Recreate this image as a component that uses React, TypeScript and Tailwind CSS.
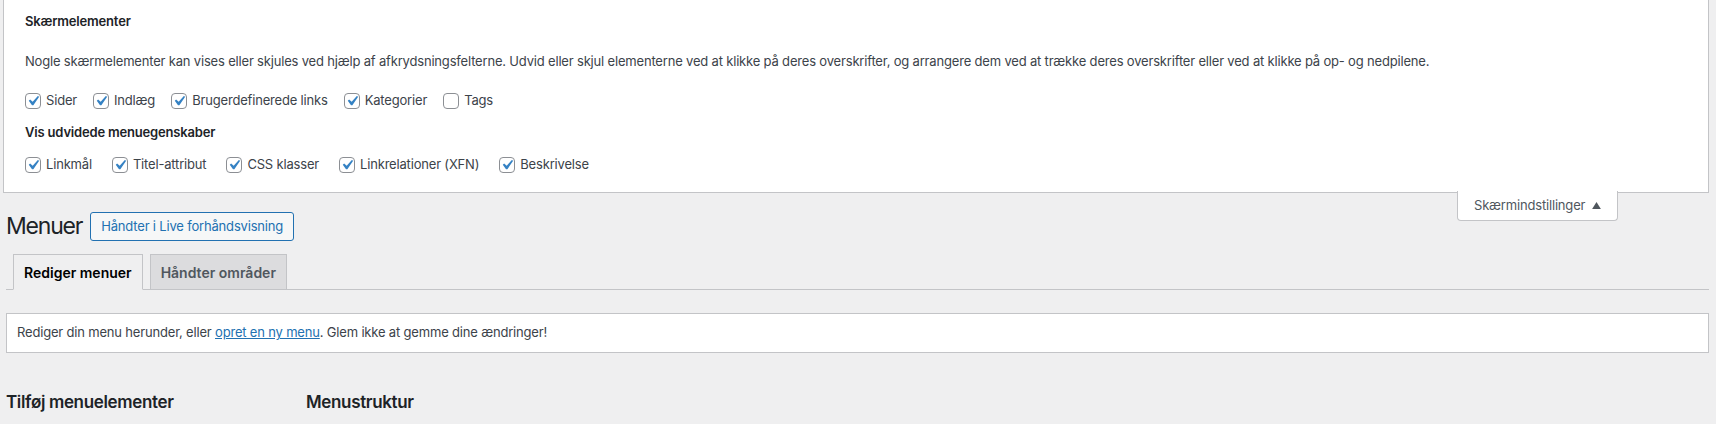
import React from 'react';

const font = "font-['Inter','Liberation_Sans',sans-serif]";

function Check({ label, checked = true }: { label: string; checked?: boolean }) {
  return (
    <label className="flex items-center">
      <span className="flex h-4 w-4 items-center justify-center rounded-[4px] border border-[#8c8f94] bg-white">
        {checked && (
          <svg viewBox="0 0 20 20" className="h-[20px] w-[20px] shrink-0">
            <path d="M14.83 4.89l1.34.94-5.81 8.38H9.02L5.78 9.67l1.34-1.25 2.57 2.4z" fill="#3582c4" />
          </svg>
        )}
      </span>
      <span className="ml-[5px] text-[13px] text-[#3c434a]">{label}</span>
    </label>
  );
}

export default function App() {
  return (
    <div className={`min-h-screen w-full bg-[#efeff0] tracking-[-0.18px] ${font}`}>
      {/* Screen options panel */}
      <div className="relative ml-[3px] mr-[7px] border-x border-b border-[#c3c4c7] bg-white px-[21px] pb-[15px] pt-[12px]">
        <div className="flex h-5 items-center text-[13px] font-semibold text-[#1d2327]">Skærmelementer</div>
        <div className="mt-5 flex h-5 items-center text-[13px] text-[#3c434a]">
          Nogle skærmelementer kan vises eller skjules ved hjælp af afkrydsningsfelterne. Udvid eller skjul elementerne ved at klikke på deres overskrifter, og arrangere dem ved at trække deres overskrifter eller ved at klikke på op- og nedpilene.
        </div>
        <div className="mt-[17px] flex h-6 items-center gap-[16px]">
          <Check label="Sider" />
          <Check label="Indlæg" />
          <Check label="Brugerdefinerede links" />
          <Check label="Kategorier" />
          <Check label="Tags" checked={false} />
        </div>
        <div className="mt-[10px] flex h-5 items-center text-[13px] font-semibold text-[#1d2327]">Vis udvidede menuegenskaber</div>
        <div className="mt-[10px] flex h-6 items-center gap-[20px]">
          <Check label="Linkmål" />
          <Check label="Titel-attribut" />
          <Check label="CSS klasser" />
          <Check label="Linkrelationer (XFN)" />
          <Check label="Beskrivelse" />
        </div>

        {/* Screen options toggle tab */}
        <button className="absolute right-[90px] top-[calc(100%-1px)] flex h-[30px] w-[161px] items-center rounded-b-[4px] border-x border-b border-[#c3c4c7] bg-white pl-[16px] text-[13px] text-[#50575e]">
          Skærmindstillinger
          <svg viewBox="0 0 10 8" className="ml-[7px] h-[7px] w-[9px]">
            <path d="M5 0L10 8H0z" fill="#50575e" />
          </svg>
        </button>
      </div>

      <div className="ml-[6px] mr-[7px]">
        {/* Heading */}
        <div className="mt-[19px] flex h-[29px] items-center">
          <h1 className="text-[23px] font-normal leading-none tracking-[-1.2px] text-[#1d2327]">Menuer</h1>
          <button className="ml-[8px] h-[29px] rounded-[3px] border border-[#2271b1] bg-[#f6f7f7] px-[10px] text-[13px] text-[#2271b1]">
            Håndter i Live forhåndsvisning
          </button>
        </div>

        {/* Tabs */}
        <div className="mt-[13px] flex h-[36px] items-end border-b border-[#c3c4c7] tracking-normal">
          <div className="-mb-px ml-[7px] flex h-[36px] items-center border border-b-[#efeff0] border-[#c3c4c7] bg-[#efeff0] px-[10px] text-[14px] font-semibold text-black">
            Rediger menuer
          </div>
          <div className="-mb-px ml-[7px] flex h-[36px] items-center border border-[#c3c4c7] bg-[#dcdcde] px-[10px] text-[14px] font-semibold text-[#50575e]">
            Håndter områder
          </div>
        </div>

        {/* Notice */}
        <div className="mt-[23px] flex h-[40px] items-center border border-[#c3c4c7] bg-white px-[10px] text-[13px] text-[#3c434a]">
          <span>
            Rediger din menu herunder, eller{' '}
            <a className="text-[#2271b1] underline">opret en ny menu</a>. Glem ikke at gemme dine ændringer!
          </span>
        </div>

        {/* Columns */}
        <div className="mt-[37px] flex">
          <h2 className="w-[300px] text-[17px] font-semibold tracking-[-0.35px] text-[#1d2327]">Tilføj menuelementer</h2>
          <h2 className="text-[17px] font-semibold tracking-[-0.35px] text-[#1d2327]">Menustruktur</h2>
        </div>
      </div>
    </div>
  );
}
